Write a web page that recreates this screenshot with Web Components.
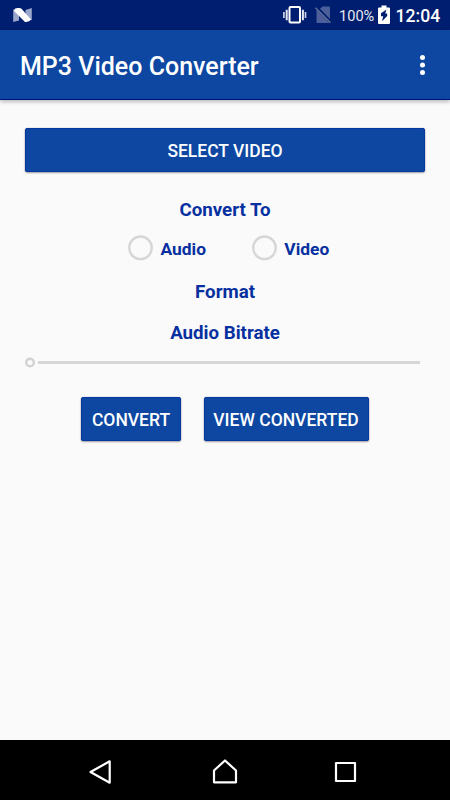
<!DOCTYPE html>
<html lang="en">
<head>
<meta charset="utf-8">
<title>MP3 Video Converter</title>
<style>
    body {
        margin: 0;
        background: #fafafa;
        font-family: Roboto, "Liberation Sans", sans-serif;
    }
</style>
</head>
<body>
<converter-app></converter-app>

<script>
class StatusBar extends HTMLElement {
    constructor() {
        super();
        this.attachShadow({mode: 'open'});
        this.shadowRoot.innerHTML = `<style>
        :host {
            display: flex;
            align-items: center;
            height: 30px;
            box-sizing: border-box;
            padding: 0 10px 0 13px;
            background: #001e70;
            color: white;
        }
        svg { display: block; flex: none; }
        .logo { margin-right: auto; }
        .sim { margin-left: 8px; }
        .percent { width: 36px; margin-left: 8px; font-size: 14.6px; line-height: 30px; padding-top: 2px; opacity: .9; }
        .battery { margin-left: 3px; }
        .clock { width: 44.5px; margin-left: 5.5px; font-size: 17.6px; font-weight: 500; line-height: 30px; padding-top: 1px; white-space: nowrap; }
        </style>
        <svg class="logo" width="19" height="14" viewBox="0 0 19 14">
            <path d="M.2 1.500L6 3v9.500L.2 14zM12.500 2L18.800 0v12.300L12.500 11z" fill="#9aa5cb"/>
            <path d="M2.200 .6Q6-.8 8.500 .8L18 11.500Q16.500 14.200 12 14L.8 2.800z" fill="#fff"/>
        </svg>
        <svg width="24" height="20" viewBox="0 0 24 20" fill="none" stroke="#fff">
            <rect x="6.500" y="2" width="10.500" height="15.500" rx="1" stroke-width="2"/>
            <path d="M3.700 4.800v10.500M19.900 4.800v10.500" stroke-width="2" opacity=".9"/>
            <path d="M.9 7v6M22.500 7v6" stroke-width="1.700" opacity=".8"/>
        </svg>
        <svg class="sim" width="16" height="18" viewBox="0 0 16 18">
            <path d="M5 2.700L7.500 .5H14q1 0 1 1v11.500z" fill="#4d5f9b"/>
            <path d="M1.500 3.800L14 16.500V17H2.500q-1 0-1-1z" fill="#4d5f9b"/>
            <path d="M.5 1.700L15.500 16.800" stroke="#66769f" stroke-width="1.300"/>
        </svg>
        <span class="percent">100%</span>
        <svg class="battery" width="12" height="20" viewBox="0 0 12 20">
            <path d="M3.500 .5h5v2H11q1 0 1 1V18q0 1-1 1H1q-1 0-1-1V3.500q0-1 1-1h2.500z" fill="#fff"/>
            <path d="M8.500 4.500L3 8.300v3h2.200L4 16.300 9.200 11V8.500H7.200z" fill="#001e70"/>
        </svg>
        <span class="clock">12:04</span>
        `;
    }
}

class AppBar extends HTMLElement {
    constructor() {
        super();
        this.attachShadow({mode: 'open'});
        this.shadowRoot.innerHTML = `<style>
        :host {
            display: flex;
            align-items: center;
            justify-content: space-between;
            box-sizing: border-box;
            height: 70px;
            padding: 4px 25px 0 20px;
            background: #0d47a1;
            border-bottom: 1px solid #001080;
            box-shadow: 0 2px 4px rgba(0, 0, 0, .25);
            color: white;
            font-size: 25px;
            font-weight: 500;
        }
        svg { display: block; margin-top: -4px; }
        </style>
        <slot></slot>
        <svg width="5" height="20" viewBox="0 0 5 20" fill="#fff">
            <circle cx="2.500" cy="2.500" r="2.500"/>
            <circle cx="2.500" cy="10" r="2.500"/>
            <circle cx="2.500" cy="17.500" r="2.500"/>
        </svg>
        `;
    }
}

class RaisedButton extends HTMLElement {
    constructor() {
        super();
        this.attachShadow({mode: 'open'});
        this.shadowRoot.innerHTML = `<style>
        :host { display: block; }
        button {
            display: block;
            width: 100%;
            height: 44px;
            padding: 1px 0 0;
            border: 1px solid #0638a0;
            border-radius: 2px;
            background: #0d47a1;
            box-shadow: 0 0 1px rgba(0, 0, 60, .4), 0 1px 2px rgba(0, 0, 0, .35);
            color: white;
            font: 500 17.5px Roboto, "Liberation Sans", sans-serif;
            white-space: nowrap;
        }
        </style>
        <button type="button"><slot></slot></button>
        `;
    }
}

class FieldLabel extends HTMLElement {
    constructor() {
        super();
        this.attachShadow({mode: 'open'});
        this.shadowRoot.innerHTML = `<style>
        :host {
            display: block;
            color: #0630a0;
            font-size: 18.7px;
            font-weight: 700;
            line-height: 24px;
            text-align: center;
        }
        </style>
        <slot></slot>
        `;
    }
}

class RadioOption extends HTMLElement {
    constructor() {
        super();
        this.attachShadow({mode: 'open'});
        this.shadowRoot.innerHTML = `<style>
        :host {
            display: flex;
            gap: 7.5px;
            color: #0630a0;
            font-size: 17.4px;
            font-weight: 700;
            line-height: 26px;
        }
        svg { display: block; flex: none; }
        .text { padding-top: 1px; }
        </style>
        <svg width="25" height="26" viewBox="0 0 25 26">
            <circle cx="12.500" cy="12.800" r="11.300" fill="none" stroke="#d6d6d6" stroke-width="2.400"/>
        </svg>
        <span class="text"><slot></slot></span>
        `;
    }
}

class SeekBar extends HTMLElement {
    constructor() {
        super();
        this.attachShadow({mode: 'open'});
        this.shadowRoot.innerHTML = `<style>
        :host { display: flex; align-items: center; gap: 2.5px; height: 11px; }
        svg { display: block; flex: none; }
        .track { flex: 1; height: 3px; background: #d6d6d6; }
        </style>
        <svg width="10" height="11" viewBox="0 0 10 11">
            <circle cx="5" cy="5.500" r="3.800" fill="none" stroke="#d2d2d2" stroke-width="2.400"/>
        </svg>
        <span class="track"></span>
        `;
    }
}

class NavBar extends HTMLElement {
    constructor() {
        super();
        this.attachShadow({mode: 'open'});
        this.shadowRoot.innerHTML = `<style>
        :host {
            display: flex;
            align-items: center;
            justify-content: space-between;
            box-sizing: border-box;
            height: 60px;
            padding: 3px 93px 0 88px;
            background: #000;
        }
        svg { display: block; }
        .home { margin-left: 4px; }
        </style>
        <svg width="24" height="26" viewBox="0 0 24 26" fill="none" stroke="#fff" stroke-width="2.200" stroke-linejoin="round">
            <path d="M21.700 2.300v21.400L2.500 13z"/>
        </svg>
        <svg class="home" width="26" height="26" viewBox="0 0 26 26" fill="none" stroke="#fff" stroke-width="2.200" stroke-linejoin="round">
            <path d="M13 1.500L24 11.500v11.800H2V11.500z"/>
        </svg>
        <svg width="23" height="22" viewBox="0 0 23 22" fill="none" stroke="#fff" stroke-width="2.200" stroke-linejoin="round">
            <rect x="2" y="2" width="19" height="18"/>
        </svg>
        `;
    }
}

class ConverterApp extends HTMLElement {
    constructor() {
        super();
        this.attachShadow({mode: 'open'});
        this.shadowRoot.innerHTML = `<style>
        :host { display: flex; flex-direction: column; height: 800px; }
        main { flex: 1; padding: 28px 25px 0; }
        .radios { display: flex; gap: 45.8px; height: 26px; margin: 13px 0 19px 103px; }
        field-label + field-label { margin-top: 17px; }
        .first { margin-top: 26px; }
        seek-bar { margin: 12px 5px 0 0; }
        .actions { display: flex; gap: 22.5px; margin: 29px 0 0 56px; }
        .convert { width: 100px; }
        .view { width: 165px; }
        </style>
        <status-bar></status-bar>
        <app-bar>MP3 Video Converter</app-bar>
        <main>
            <raised-button>SELECT VIDEO</raised-button>
            <field-label class="first">Convert To</field-label>
            <div class="radios">
                <radio-option>Audio</radio-option>
                <radio-option>Video</radio-option>
            </div>
            <field-label>Format</field-label>
            <field-label>Audio Bitrate</field-label>
            <seek-bar></seek-bar>
            <div class="actions">
                <raised-button class="convert">CONVERT</raised-button>
                <raised-button class="view">VIEW CONVERTED</raised-button>
            </div>
        </main>
        <nav-bar></nav-bar>
        `;
    }
}

customElements.define('status-bar', StatusBar);
customElements.define('app-bar', AppBar);
customElements.define('raised-button', RaisedButton);
customElements.define('field-label', FieldLabel);
customElements.define('radio-option', RadioOption);
customElements.define('seek-bar', SeekBar);
customElements.define('nav-bar', NavBar);
customElements.define('converter-app', ConverterApp);
</script>
</body>
</html>
